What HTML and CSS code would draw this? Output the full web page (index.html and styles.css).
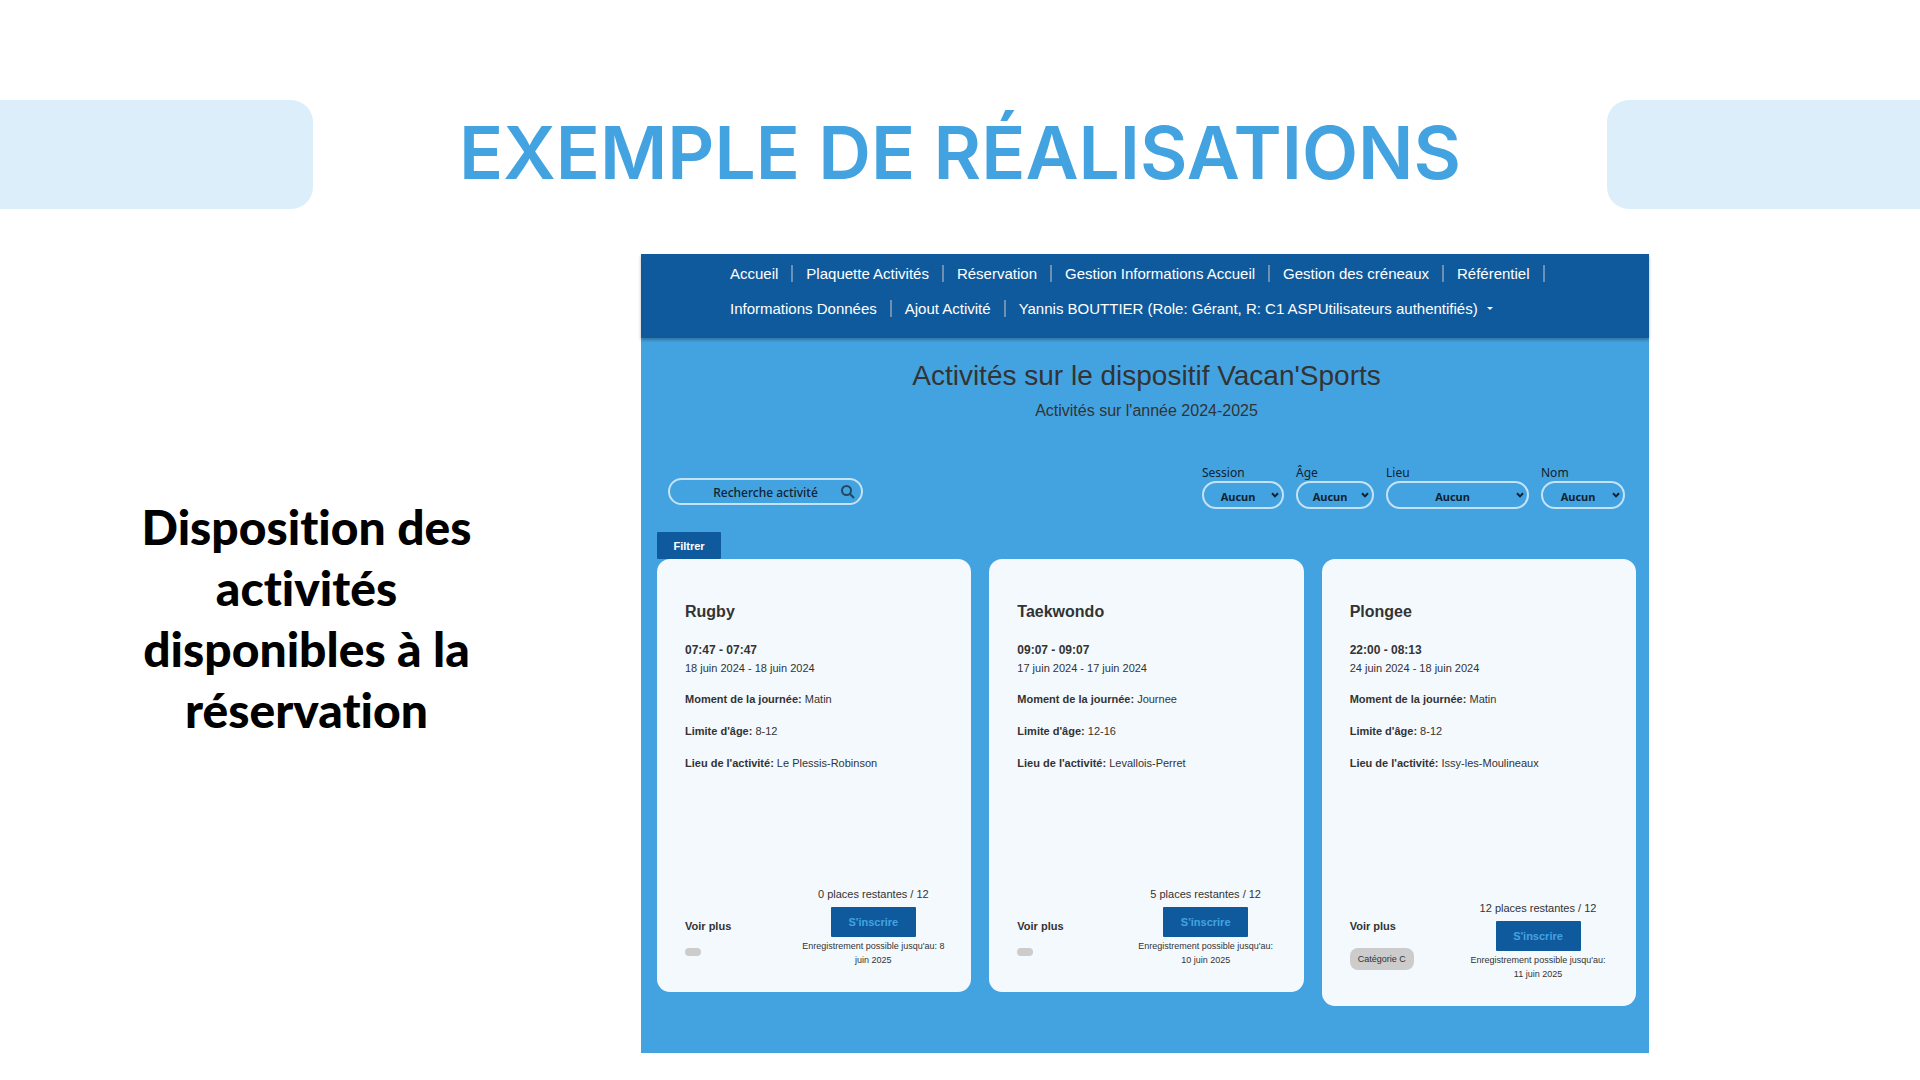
FILE: index.html
```html
<!DOCTYPE html>
<html lang="fr">
<head>
<meta charset="utf-8">
<meta name="viewport" content="width=device-width, initial-scale=1">
<title>Exemple de réalisations</title>
<link rel="stylesheet" href="styles.css">
</head>
<body>
<header class="banner">
  <span class="banner-bar banner-bar-left"></span>
  <h1 class="banner-title">EXEMPLE DE RÉALISATIONS</h1>
  <span class="banner-bar banner-bar-right"></span>
</header>
<main class="content">
  <p class="caption">Disposition des activités disponibles à la réservation</p>
  <section class="app">
    <nav class="nav">
      <a class="nav-link" href="#">Accueil</a>
      <a class="nav-link" href="#">Plaquette Activités</a>
      <a class="nav-link" href="#">Réservation</a>
      <a class="nav-link" href="#">Gestion Informations Accueil</a>
      <a class="nav-link" href="#">Gestion des créneaux</a>
      <a class="nav-link" href="#">Référentiel</a>
      <a class="nav-link" href="#">Informations Données</a>
      <a class="nav-link" href="#">Ajout Activité</a>
      <a class="nav-link nav-user" href="#">Yannis BOUTTIER (Role: Gérant, R: C1 ASPUtilisateurs authentifiés)</a>
    </nav>
    <div class="app-body">
      <h2 class="app-title">Activités sur le dispositif Vacan'Sports</h2>
      <p class="app-subtitle">Activités sur l'année 2024-2025</p>
      <form class="toolbar">
        <div class="search">
          <input class="search-input" type="text" placeholder="Recherche activité" aria-label="Recherche activité">
          <button class="search-button" type="button" aria-label="Rechercher">
            <svg class="search-icon" viewBox="0 0 14 14"><circle cx="5.5" cy="5.5" r="4.5"/><path d="M8.8 8.8 13 13"/></svg>
          </button>
        </div>
        <div class="filters">
          <div class="filter filter-session">
            <label for="session">Session</label>
            <div class="select"><select id="session"><option>Aucun</option></select><svg viewBox="0 0 8 6"><path d="M1 1.2 4 4.4 7 1.2"/></svg></div>
          </div>
          <div class="filter filter-age">
            <label for="age">Âge</label>
            <div class="select"><select id="age"><option>Aucun</option></select><svg viewBox="0 0 8 6"><path d="M1 1.2 4 4.4 7 1.2"/></svg></div>
          </div>
          <div class="filter filter-lieu">
            <label for="lieu">Lieu</label>
            <div class="select"><select id="lieu"><option>Aucun</option></select><svg viewBox="0 0 8 6"><path d="M1 1.2 4 4.4 7 1.2"/></svg></div>
          </div>
          <div class="filter filter-nom">
            <label for="nom">Nom</label>
            <div class="select"><select id="nom"><option>Aucun</option></select><svg viewBox="0 0 8 6"><path d="M1 1.2 4 4.4 7 1.2"/></svg></div>
          </div>
        </div>
      </form>
      <button class="filter-button" type="button">Filtrer</button>
      <div class="cards">
        <article class="card">
          <h3 class="card-title">Rugby</h3>
          <p class="card-time">07:47 - 07:47</p>
          <p class="card-date">18 juin 2024 - 18 juin 2024</p>
          <div class="card-details">
            <p><b>Moment de la journée:</b> Matin</p>
            <p><b>Limite d'âge:</b> 8-12</p>
            <p><b>Lieu de l'activité:</b> Le Plessis-Robinson</p>
          </div>
          <div class="card-foot">
            <div class="more"><a class="more-link" href="#">Voir plus</a><span class="tag"></span></div>
            <div class="booking">
              <p class="places">0 places restantes / 12</p>
              <button class="book-button" type="button">S'inscrire</button>
              <p class="deadline">Enregistrement possible jusqu'au: 8 juin 2025</p>
            </div>
          </div>
        </article>
        <article class="card">
          <h3 class="card-title">Taekwondo</h3>
          <p class="card-time">09:07 - 09:07</p>
          <p class="card-date">17 juin 2024 - 17 juin 2024</p>
          <div class="card-details">
            <p><b>Moment de la journée:</b> Journee</p>
            <p><b>Limite d'âge:</b> 12-16</p>
            <p><b>Lieu de l'activité:</b> Levallois-Perret</p>
          </div>
          <div class="card-foot">
            <div class="more"><a class="more-link" href="#">Voir plus</a><span class="tag"></span></div>
            <div class="booking">
              <p class="places">5 places restantes / 12</p>
              <button class="book-button" type="button">S'inscrire</button>
              <p class="deadline">Enregistrement possible jusqu'au: 10 juin 2025</p>
            </div>
          </div>
        </article>
        <article class="card">
          <h3 class="card-title">Plongee</h3>
          <p class="card-time">22:00 - 08:13</p>
          <p class="card-date">24 juin 2024 - 18 juin 2024</p>
          <div class="card-details">
            <p><b>Moment de la journée:</b> Matin</p>
            <p><b>Limite d'âge:</b> 8-12</p>
            <p><b>Lieu de l'activité:</b> Issy-les-Moulineaux</p>
          </div>
          <div class="card-foot">
            <div class="more"><a class="more-link" href="#">Voir plus</a><span class="tag">Catégorie C</span></div>
            <div class="booking">
              <p class="places">12 places restantes / 12</p>
              <button class="book-button" type="button">S'inscrire</button>
              <p class="deadline">Enregistrement possible jusqu'au: 11 juin 2025</p>
            </div>
          </div>
        </article>
      </div>
    </div>
  </section>
</main>
</body>
</html>
```
FILE: styles.css
```css
* {
  box-sizing: border-box;
}

body,
h1,
h2,
h3,
p {
  margin: 0;
}

body {
  background: #fff;
  color: #333;
  font-family: "Liberation Sans", Arial, sans-serif;
}

a {
  color: inherit;
  text-decoration: none;
}

button,
input,
select {
  margin: 0;
  font-family: inherit;
}

/* Banner */
.banner {
  display: grid;
  grid-template-columns: 313fr 1294fr 313fr;
  align-items: center;
  padding-top: 100px;
}

.banner-bar {
  height: 109px;
  background: #dceefa;
}

.banner-bar-left {
  border-radius: 0 22px 22px 0;
}

.banner-bar-right {
  border-radius: 22px 0 0 22px;
}

.banner-title {
  padding-bottom: 4px;
  color: #43a3e1;
  font-family: Inter, sans-serif;
  font-size: 73px;
  font-weight: 600;
  line-height: 100px;
  text-align: center;
  white-space: nowrap;
}

/* Two-column content */
.content {
  display: grid;
  grid-template-columns: 641fr 1008fr 271fr;
  align-items: start;
  padding: 45px 0 27px;
}

.caption {
  justify-self: center;
  max-width: 400px;
  margin-right: 28px;
  padding-top: 242px;
  color: #000;
  font-family: Lato, sans-serif;
  font-size: 48px;
  font-variant-ligatures: none;
  font-weight: 900;
  line-height: 61px;
  text-align: center;
}

.app {
  background: #43a3e1;
}

/* Navigation */
.nav {
  display: flex;
  flex-wrap: wrap;
  padding: 2px 89px 12px;
  background: #0f5a9d;
  box-shadow: 0 2px 3px rgba(0, 0, 0, 0.3);
  color: #fff;
  font-size: 15px;
  line-height: 35px;
}

.nav-link {
  display: flex;
  align-items: center;
  white-space: nowrap;
}

.nav-link::after {
  content: "";
  width: 2px;
  height: 17px;
  margin: 0 13px;
  background: #6f90b0;
}

.nav-user::after {
  width: 0;
  height: 0;
  margin: 0 9px;
  border: 3px solid transparent;
  border-top-color: #fff;
  border-bottom-width: 0;
  background: none;
}

/* Page body */
.app-body {
  padding: 20px 13px 47px 16px;
}

.app-title {
  font-size: 28px;
  font-weight: 400;
  line-height: 36px;
  text-align: center;
}

.app-subtitle {
  margin-top: 7px;
  font-size: 16px;
  line-height: 20px;
  text-align: center;
}

.toolbar {
  display: flex;
  justify-content: space-between;
  align-items: flex-start;
  margin-top: 44px;
  padding: 0 11px;
  color: #10222f;
  font-family: "Noto Sans", sans-serif;
  font-size: 12px;
}

.search {
  position: relative;
  margin-top: 13px;
}

.search-input {
  width: 195px;
  height: 27px;
  padding: 2px 24px 0;
  border: 2px solid #c5e3f8;
  border-radius: 14px;
  background: transparent;
  color: #10222f;
  font-size: 12px;
  font-weight: 500;
  text-align: center;
}

.search-input::placeholder {
  color: #10222f;
  opacity: 1;
}

.search-button {
  position: absolute;
  top: 7px;
  right: 8px;
  display: flex;
  padding: 0;
  border: 0;
  background: none;
}

.search-icon {
  width: 14px;
  height: 14px;
  fill: none;
  stroke: #24485f;
  stroke-width: 2;
}

.filters {
  display: flex;
  gap: 12px;
}

.filter label {
  display: block;
  line-height: 16px;
}

.filter-session {
  width: 82px;
}

.filter-age {
  width: 78px;
}

.filter-lieu {
  width: 143px;
}

.filter-nom {
  width: 84px;
}

.select {
  position: relative;
}

.select select {
  width: 100%;
  height: 28px;
  padding: 2px 12px 0 2px;
  appearance: none;
  border: 2px solid #c5e3f8;
  border-radius: 14px;
  background: transparent;
  color: #10222f;
  font-size: 11px;
  font-weight: 700;
  text-align: center;
  text-align-last: center;
}

.select svg {
  position: absolute;
  top: 11px;
  right: 5px;
  width: 8px;
  height: 6px;
  fill: none;
  stroke: #10222f;
  stroke-width: 2;
  pointer-events: none;
}

.filter-button {
  display: block;
  width: 64px;
  height: 27px;
  margin-top: 23px;
  padding: 0;
  border: 0;
  border-radius: 1px;
  background: #0f5a9d;
  color: #fff;
  font-size: 11px;
  font-weight: 700;
}

/* Cards */
.cards {
  display: grid;
  grid-template-columns: repeat(3, 1fr);
  align-items: start;
  gap: 18px;
}

.card {
  padding: 41px 25px 25px 28px;
  border-radius: 13px;
  background: #f4f9fe;
  font-size: 11px;
  line-height: 16px;
}

.card-title {
  font-size: 16px;
  line-height: 24px;
}

.card-time {
  margin-top: 17px;
  font-size: 12px;
  font-weight: 700;
  line-height: 18px;
}

.card-date {
  line-height: 18px;
}

.card-details {
  display: grid;
  gap: 16px;
  margin-top: 14px;
}

.card-foot {
  display: flex;
  justify-content: space-between;
  align-items: flex-end;
  margin-top: 115px;
}

.more {
  display: flex;
  flex-direction: column;
  align-items: flex-start;
  gap: 14px;
  padding: 32px 0 11px;
}

.more-link {
  font-weight: 700;
}

.tag {
  padding: 4px 8px;
  border-radius: 8px;
  background: #ccc;
  font-size: 9px;
  line-height: 14px;
}

.tag:empty {
  border-radius: 4px;
}

.booking {
  display: flex;
  flex-direction: column;
  align-items: center;
  width: 146px;
  text-align: center;
}

.book-button {
  width: 85px;
  height: 30px;
  margin-top: 5px;
  padding: 0;
  border: 0;
  border-radius: 1px;
  background: #0f5a9d;
  color: #43a3e1;
  font-size: 11px;
  font-weight: 700;
}

.deadline {
  margin-top: 2px;
  font-size: 9px;
  line-height: 14px;
}
```
